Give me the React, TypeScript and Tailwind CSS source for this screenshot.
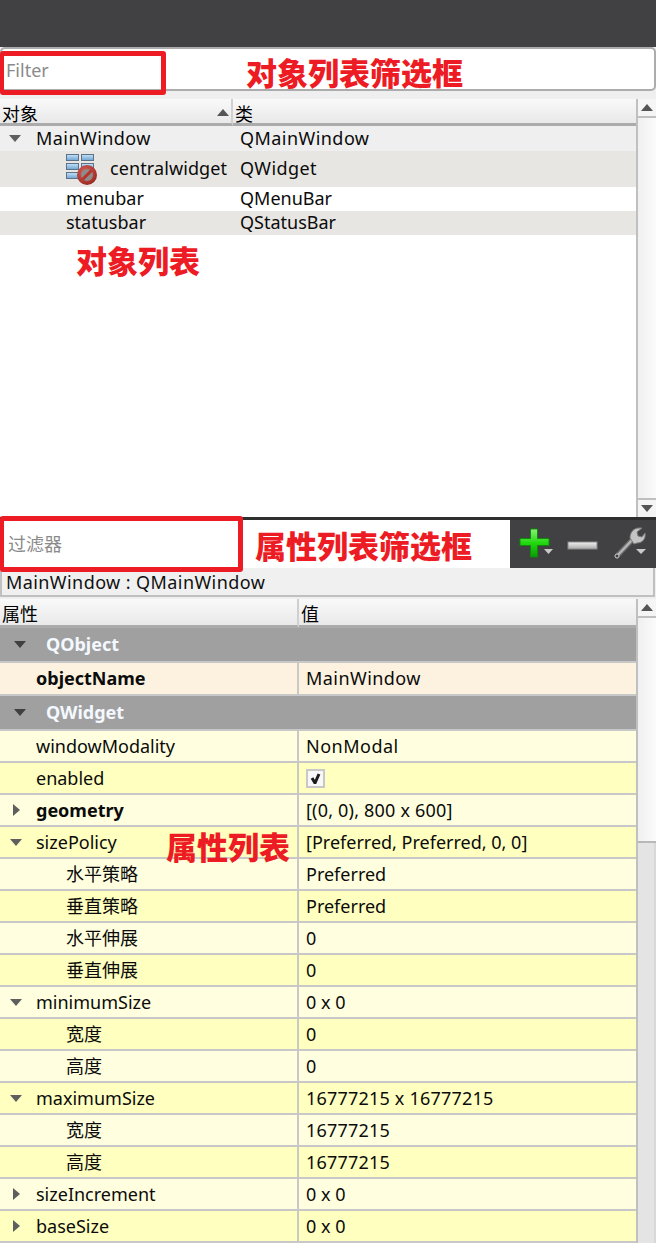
import React from "react";

const FONT = "font-['Noto_Sans','Noto_Sans_CJK_SC',sans-serif]";

type PropRow = {
  name: string;
  value?: string;
  arrow?: "down" | "right";
  bold?: boolean;
  child?: boolean;
  check?: boolean;
  track?: string;
};

const rows: PropRow[] = [
  { name: "windowModality", value: "NonModal", track: "tracking-[0.5px]" },
  { name: "enabled", check: true },
  { name: "geometry", value: "[(0, 0), 800 x 600]", arrow: "right", bold: true, track: "tracking-[0.2px]" },
  { name: "sizePolicy", value: "[Preferred, Preferred, 0, 0]", arrow: "down" },
  { name: "水平策略", value: "Preferred", child: true },
  { name: "垂直策略", value: "Preferred", child: true },
  { name: "水平伸展", value: "0", child: true },
  { name: "垂直伸展", value: "0", child: true },
  { name: "minimumSize", value: "0 x 0", arrow: "down" },
  { name: "宽度", value: "0", child: true },
  { name: "高度", value: "0", child: true },
  { name: "maximumSize", value: "16777215 x 16777215", arrow: "down", track: "tracking-[0.2px]" },
  { name: "宽度", value: "16777215", child: true, track: "tracking-[0.2px]" },
  { name: "高度", value: "16777215", child: true, track: "tracking-[0.2px]" },
  { name: "sizeIncrement", value: "0 x 0", arrow: "right" },
  { name: "baseSize", value: "0 x 0", arrow: "right" },
];

function Arrow({ dir, color = "#5f5f5f" }: { dir: "down" | "right" | "up"; color?: string }) {
  if (dir === "right") {
    return (
      <svg width="7" height="12" viewBox="0 0 7 12" className="shrink-0">
        <path d="M0 0 L7 6 L0 12 Z" fill={color} />
      </svg>
    );
  }
  return (
    <svg width="12" height="7" viewBox="0 0 12 7" className="shrink-0">
      <path d={dir === "down" ? "M0 0 H12 L6 7 Z" : "M0 7 H12 L6 0 Z"} fill={color} />
    </svg>
  );
}

function WidgetIcon() {
  return (
    <svg width="32" height="32" viewBox="0 0 32 32" className="shrink-0">
      <defs>
        <linearGradient id="cell" x1="0" y1="0" x2="0" y2="1">
          <stop offset="0" stopColor="#c4e4f8" />
          <stop offset="1" stopColor="#6ea3d2" />
        </linearGradient>
        <radialGradient id="stop" cx="0.4" cy="0.35" r="0.8">
          <stop offset="0" stopColor="#d9635c" />
          <stop offset="1" stopColor="#8f1d16" />
        </radialGradient>
      </defs>
      <g stroke="#5d7188" strokeWidth="1">
        <rect x="0.5" y="1.5" width="12" height="6" fill="url(#cell)" />
        <rect x="15.5" y="1.5" width="12" height="6" fill="url(#cell)" />
        <rect x="0.5" y="10.5" width="12" height="6" fill="url(#cell)" />
        <rect x="15.5" y="10.5" width="12" height="6" fill="url(#cell)" />
        <rect x="0.5" y="19.5" width="12" height="6" fill="url(#cell)" />
      </g>
      <circle cx="21" cy="22" r="10" fill="url(#stop)" />
      <circle cx="21" cy="22" r="6" fill="#8f8b88" />
      <path d="M16.5 26.5 L25.5 17.5" stroke="#b5342c" strokeWidth="3" />
    </svg>
  );
}

function PlusIcon() {
  return (
    <svg width="34" height="32" viewBox="0 0 34 32">
      <defs>
        <linearGradient id="plus" x1="0" y1="0" x2="0" y2="1">
          <stop offset="0" stopColor="#8cf07a" />
          <stop offset="0.5" stopColor="#22d80f" />
          <stop offset="1" stopColor="#0b9a06" />
        </linearGradient>
      </defs>
      <path
        d="M11.5 1 H18.5 V10.5 H30 V17.5 H18.5 V29 H11.5 V17.5 H1 V10.5 H11.5 Z"
        fill="url(#plus)"
        stroke="#0f8a0b"
      />
      <path d="M25 21 H34 L29.5 26 Z" fill="#c9c9c9" />
    </svg>
  );
}

function MinusIcon() {
  return (
    <svg width="32" height="12" viewBox="0 0 32 12">
      <defs>
        <linearGradient id="minus" x1="0" y1="0" x2="0" y2="1">
          <stop offset="0" stopColor="#f1f1f1" />
          <stop offset="1" stopColor="#aaaaaa" />
        </linearGradient>
      </defs>
      <rect x="1" y="2" width="29" height="7" fill="url(#minus)" stroke="#8a8a8a" />
    </svg>
  );
}

function WrenchIcon() {
  return (
    <svg width="34" height="36" viewBox="0 0 34 36">
      <path d="M4 30 L20 13" stroke="#6d6d6d" strokeWidth="5" strokeLinecap="round" />
      <path d="M4 30 L20 13" stroke="#b5b5b5" strokeWidth="2.5" strokeLinecap="round" />
      <path
        d="M17 12 C17 6 21 2 26 2 L29 2 L24 6 L25 10 L29 11 L32 7 C33 12 30 17 24 17 L21 18 Z"
        fill="#c4c4c4"
        stroke="#7b7b7b"
      />
      <circle cx="4" cy="30" r="2" fill="#414143" stroke="#c4c4c4" />
      <path d="M23 23 H33 L28 28 Z" fill="#c9c9c9" />
    </svg>
  );
}

function HeaderCell({
  label,
  className,
  labelClass,
  children,
}: {
  label: string;
  className?: string;
  labelClass?: string;
  children?: React.ReactNode;
}) {
  return (
    <div
      className={`flex items-end justify-between h-full pl-[2px] pr-[3px] leading-[22px] text-[18px] text-black bg-gradient-to-b from-[#f9f9f9] to-[#e9e9e9] border-b-[3px] border-[#ababab] ${className ?? ""}`}
    >
      <span className={labelClass}>{label}</span>
      {children}
    </div>
  );
}

function ScrollCap({ dir }: { dir: "up" | "down" }) {
  return (
    <div
      className={`h-[19px] flex items-center justify-center bg-[#f5f5f5] border-[#c0c0c0] ${
        dir === "up" ? "border-b-2" : "border-t-2"
      }`}
    >
      <Arrow dir={dir} color="#555555" />
    </div>
  );
}

function PropertyRow({ row, even }: { row: PropRow; even: boolean }) {
  return (
    <div className={`flex h-[32px] border-b-2 border-[#c8c8c8] ${even ? "bg-[#ffffdf]" : "bg-[#ffffbf]"}`}>
      <div
        className={`w-[297px] flex items-center shrink-0 ${row.child ? "pl-[66px]" : "pl-[36px]"} relative ${
          row.bold ? "font-bold" : ""
        }`}
      >
        {row.arrow && (
          <div className="absolute left-[9px] top-0 bottom-0 flex items-center w-[14px] justify-center">
            <Arrow dir={row.arrow} />
          </div>
        )}
        {row.name}
      </div>
      <div className="w-[2px] bg-[#c8c8c8] shrink-0" />
      <div className={`flex items-center pl-[7px] min-w-0 whitespace-nowrap ${row.track ?? ""}`}>
        {row.check ? (
          <div className="w-[19px] h-[19px] border-2 border-[#c8c8c8] bg-[#f8f8f8] flex items-center justify-center">
            <svg width="11" height="11" viewBox="0 0 11 11">
              <path d="M2 5 L5 10 L9 1" fill="none" stroke="#1c1c1c" strokeWidth="3" />
            </svg>
          </div>
        ) : (
          row.value
        )}
      </div>
    </div>
  );
}

function GroupRow({ label }: { label: string }) {
  return (
    <div className="h-[33px] bg-[#a0a0a0] flex items-center pl-[14px] gap-[20px] text-[#f4f8ff] font-bold">
      <Arrow dir="down" color="#3f3f3f" />
      <span>{label}</span>
    </div>
  );
}

export default function App() {
  return (
    <div className={`relative w-[656px] h-[1243px] overflow-hidden bg-[#efefef] text-[18px] text-[#0b0b0b] ${FONT}`}>
      {/* object inspector */}
      <div className="h-[47px] bg-[#414143]" />
      <div className="h-[52px] pb-[8px]">
        <div className="h-[44px] bg-white border-2 border-[#acacac] rounded-[5px] flex items-center pl-[4px] pt-[2px] text-[#8a8a8a]">
          Filter
        </div>
      </div>

      <div className="flex h-[418px]">
        <div className="w-[636px] flex flex-col">
          <div className="flex h-[27px] shrink-0">
            <HeaderCell label="对象" labelClass="translate-y-[2px]" className="w-[233px] border-r-2 border-r-[#d0d0d0]">
              <div className="mb-[7px] mr-[-1px]">
                <Arrow dir="up" color="#555555" />
              </div>
            </HeaderCell>
            <HeaderCell label="类" labelClass="translate-y-[2px]" className="flex-1" />
          </div>
          <div className="flex-1 bg-white">
            <TreeRow
              className="h-[25px] bg-[#efefef]"
              indent="pl-[36px]"
              name="MainWindow"
              cls="QMainWindow"
              arrow
              track="tracking-[0.45px]"
            />
            <div className="h-[36px] bg-[#e7e6e2] flex items-center">
              <div className="w-[240px] shrink-0 pl-[66px] flex items-center gap-[12px]">
                <WidgetIcon />
                <span className="pb-[2px] tracking-[0.1px]">centralwidget</span>
              </div>
              <span className="pb-[2px] tracking-[0.4px]">QWidget</span>
            </div>
            <TreeRow className="h-[24px] bg-white pb-[2px]" indent="pl-[66px]" name="menubar" cls="QMenuBar" />
            <TreeRow className="h-[24px] bg-[#e7e6e2] pb-[2px]" indent="pl-[66px]" name="statusbar" cls="QStatusBar" />
          </div>
        </div>
        <div className="w-[20px] flex flex-col justify-between bg-gradient-to-r from-[#f0f0f0] to-[#fbfbfb] border-l-2 border-[#c0c0c0]">
          <ScrollCap dir="up" />
          <ScrollCap dir="down" />
        </div>
      </div>

      {/* property editor toolbar */}
      <div className="h-[51px] bg-[#414143] border-t-[3px] border-[#2f2f2f] flex">
        <div className="w-[510px] bg-white flex items-center pl-[8px] text-[#8a8a8a]">过滤器</div>
        <div className="flex-1 flex items-center pl-[9px]">
          <PlusIcon />
          <div className="ml-[14px] mt-[3px]">
            <MinusIcon />
          </div>
          <div className="ml-[14px]">
            <WrenchIcon />
          </div>
        </div>
      </div>
      <div className="h-[29px] bg-[#f0f0f0] border-2 border-t-0 border-[#c0c0c0] pl-[4px] pt-[1px] flex items-center text-[#111] mr-[1px] tracking-[0.42px]">
        MainWindow : QMainWindow
      </div>
      <div className="h-[2px]" />

      {/* property list */}
      <div className="flex">
        <div className="w-[636px] shrink-0">
          <div className="flex h-[29px]">
            <HeaderCell label="属性" className="w-[299px] border-r-2 border-r-[#d0d0d0]" />
            <HeaderCell label="值" className="flex-1" />
          </div>
          <GroupRow label="QObject" />
          <div className="flex h-[35px] bg-[#fdf1df] border-t-2 border-b-2 border-[#c8c8c8]">
            <div className="w-[297px] shrink-0 pl-[36px] flex items-center font-bold">objectName</div>
            <div className="w-[2px] bg-[#c8c8c8] shrink-0" />
            <div className="flex items-center pl-[7px] tracking-[0.45px]">MainWindow</div>
          </div>
          <GroupRow label="QWidget" />
          <div className="h-[2px] bg-[#c8c8c8]" />
          {rows.map((row, i) => (
            <PropertyRow key={i} row={row} even={i % 2 === 0} />
          ))}
        </div>
        <div className="flex-1 flex flex-col border-l-2 border-[#c0c0c0]">
          <ScrollCap dir="up" />
          <div className="h-[225px] bg-gradient-to-r from-[#f0f0f0] to-[#fbfbfb] border-b-2 border-[#b8b8b8]" />
          <div className="flex-1 bg-[#e4e4e4] border-r-2 border-[#d8d8d8]" />
        </div>
      </div>

      {/* red annotations */}
      <div className="absolute left-0 top-[51px] w-[166px] h-[44px] border-[5px] border-l-4 border-[#ed1c24] rounded-[3px]" />
      <div className="absolute left-0 top-[516px] w-[243px] h-[56px] border-[5px] border-l-4 border-[#ed1c24] rounded-[3px]" />
      <Note className="left-[246px] top-[51px]">对象列表筛选框</Note>
      <Note className="left-[76px] top-[239px]">对象列表</Note>
      <Note className="left-[255px] top-[524px]">属性列表筛选框</Note>
      <Note className="left-[166px] top-[825px]">属性列表</Note>
    </div>
  );
}

function TreeRow({
  className,
  indent,
  name,
  cls,
  arrow,
  track,
}: {
  className: string;
  indent: string;
  name: string;
  cls: string;
  arrow?: boolean;
  track?: string;
}) {
  return (
    <div className={`relative flex items-center ${className}`}>
      {arrow && (
        <div className="absolute left-[9px]">
          <Arrow dir="down" />
        </div>
      )}
      <div className={`w-[240px] shrink-0 ${indent} ${track ?? ""}`}>{name}</div>
      <span className={track}>{cls}</span>
    </div>
  );
}

function Note({ className, children }: { className: string; children: React.ReactNode }) {
  return (
    <div className={`absolute text-[31px] leading-[44px] font-black text-[#ed1c24] whitespace-nowrap ${className}`}>
      {children}
    </div>
  );
}
